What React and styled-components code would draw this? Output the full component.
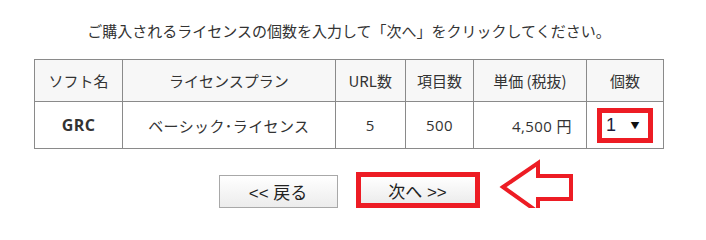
import React from "react";
import styled, { createGlobalStyle } from "styled-components";

const GlobalStyle = createGlobalStyle`
  body {
    margin: 0;
    background: #ffffff;
    font-family: "Noto Sans CJK JP", "Noto Sans", sans-serif;
    color: #333333;
  }
`;

const Page = styled.div`
  width: 630px;
  margin-left: 34px;
  padding-top: 20px;
`;

const Lead = styled.p`
  margin: 0 0 18px;
  text-align: center;
  font-size: 15px;
  line-height: 21px;
  color: #333333;
`;

const Table = styled.table`
  width: 630px;
  border-collapse: collapse;
  table-layout: fixed;
  font-size: 15px;
  color: #333333;
`;

const Th = styled.th`
  width: ${(props) => props.w}%;
  height: 41px;
  padding: 0;
  background: #f7f7f7;
  border: 1px solid #8a8a8a;
  font-weight: normal;
  text-align: center;
`;

const Td = styled.td`
  height: 46px;
  padding: ${(props) => (props.right ? "0 14px 0 0" : "0")};
  border: 1px solid #8a8a8a;
  text-align: ${(props) => (props.right ? "right" : "center")};
  font-weight: ${(props) => (props.bold ? "bold" : "normal")};
  font-size: ${(props) => (props.bold ? "16px" : "15px")};
  font-family: "Open Sans", "Noto Sans CJK JP", sans-serif;
  letter-spacing: 0.4px;
`;

const QtySelect = styled.div`
  box-sizing: border-box;
  width: 56px;
  height: 35px;
  margin: 0 auto;
  border: 5px solid #ed1c24;
  background: #ffffff;
  display: flex;
  align-items: center;
  justify-content: space-between;
  padding: 0 8px 0 4px;
  color: #1c1c3c;
`;

const QtyValue = styled.span`
  font-family: "Liberation Sans", sans-serif;
  font-size: 18px;
`;

const Caret = styled.span`
  font-size: 9px;
  color: #111111;
`;

const ButtonRow = styled.div`
  display: flex;
  justify-content: center;
  align-items: flex-end;
  gap: 18px;
  margin-top: 23px;
`;

const Button = styled.button`
  box-sizing: border-box;
  width: ${(props) => (props.primary ? 124 : 119)}px;
  height: ${(props) => (props.primary ? 36 : 33)}px;
  border: ${(props) => (props.primary ? "5px solid #ed1c24" : "1px solid #a8a8a8")};
  border-radius: 0;
  background: linear-gradient(#ffffff, #ececec);
  font-family: "Liberation Sans", "Noto Sans CJK JP", sans-serif;
  font-size: 17px;
  color: #222222;
  padding: 0;
  cursor: pointer;
`;

const NextWrap = styled.div`
  position: relative;
`;

const Pointer = styled.svg`
  position: absolute;
  left: calc(100% + 19px);
  top: -13px;
`;

const columns = [
  ["ソフト名", 88],
  ["ライセンスプラン", 214],
  ["URL数", 70],
  ["項目数", 68],
  ["単価 (税抜)", 113],
  ["個数", 77],
];

export default function App() {
  return (
    <>
      <GlobalStyle />
      <Page>
        <Lead>ご購入されるライセンスの個数を入力して「次へ」をクリックしてください。</Lead>
        <Table>
          <thead>
            <tr>
              {columns.map(([label, w]) => (
                <Th key={label} w={(w / 630) * 100}>
                  {label}
                </Th>
              ))}
            </tr>
          </thead>
          <tbody>
            <tr>
              <Td bold>GRC</Td>
              <Td>ベーシック･ライセンス</Td>
              <Td>5</Td>
              <Td>500</Td>
              <Td right>4,500 円</Td>
              <Td>
                <QtySelect>
                  <QtyValue>1</QtyValue>
                  <Caret>▼</Caret>
                </QtySelect>
              </Td>
            </tr>
          </tbody>
        </Table>
        <ButtonRow>
          <Button>&lt;&lt; 戻る</Button>
          <NextWrap>
            <Button primary>次へ &gt;&gt;</Button>
            <Pointer width="78" height="57" viewBox="0 0 78 57">
              <polygon
                points="4,28 39,4 39,17 72,17 72,40 39,40 39,53"
                fill="#ffffff"
                stroke="#ed1c24"
                strokeWidth="4"
                strokeLinejoin="miter"
              />
            </Pointer>
          </NextWrap>
        </ButtonRow>
      </Page>
    </>
  );
}
